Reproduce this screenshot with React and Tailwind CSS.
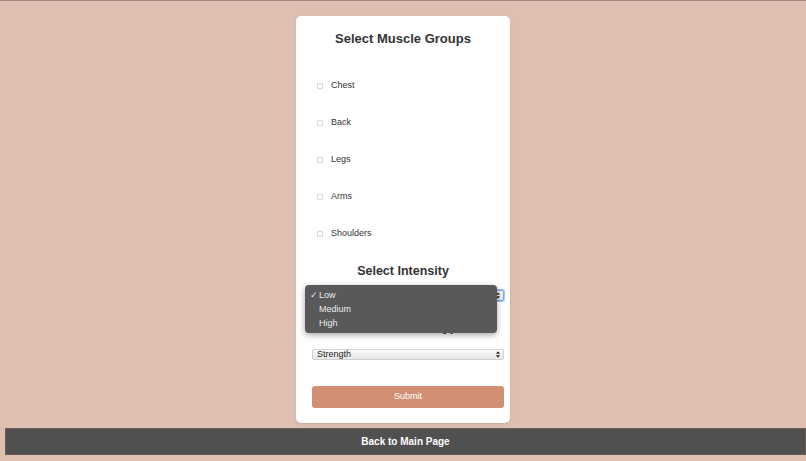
import React from 'react';

const muscles = ['Chest', 'Back', 'Legs', 'Arms', 'Shoulders'];

const Arrows = () => (
  <svg viewBox="0 0 6 10" className="w-[4px] h-[7px]">
    <path d="M3 0 L6 4 L0 4 Z M3 10 L6 6 L0 6 Z" fill="#222" />
  </svg>
);

const FakeSelect = ({ children, focused }) => (
  <div
    className={`h-[11px] w-[192px] flex items-center justify-between pl-[4px] pr-[3px] rounded-[2px] border bg-gradient-to-b from-[#fbfbfb] to-[#e6e6e6] ${
      focused ? 'border-[#7ea5e6] ring-1 ring-[#a9c4f2]' : 'border-[#d0d0d0]'
    }`}
  >
    <span className="text-[9px] leading-none text-[#222]">{children}</span>
    <Arrows />
  </div>
);

export default function App() {
  return (
    <div
      className="min-h-[461px] bg-[#dfbfb1] border-t border-[#a08a80] flex flex-col"
      style={{ fontFamily: '"Liberation Sans", Arial, sans-serif' }}
    >
      <div className="flex justify-center pt-[15px]">
        <div className="relative w-[214px] h-[407px] bg-white rounded-[5px] shadow-sm pl-[16px] flex flex-col">
          <h2 className="text-center text-[13px] font-bold text-[#333] mt-[16px] pr-[16px] leading-none">
            Select Muscle Groups
          </h2>
          <div className="flex flex-col gap-[26px] mt-[35px] pl-[5px]">
            {muscles.map((m) => (
              <label key={m} className="flex items-center h-[11px] gap-[8px]">
                <span className="w-[6px] h-[6px] border border-[#d6d6d6] rounded-[1px] bg-white" />
                <span className="text-[9px] text-[#333]">{m}</span>
              </label>
            ))}
          </div>
          <h2 className="text-center text-[12.5px] font-bold text-[#333] mt-[26px] pr-[16px] leading-none">
            Select Intensity
          </h2>
          <div className="mt-[12px]">
            <FakeSelect focused>Low</FakeSelect>
          </div>
          <h2 className="text-center text-[12.5px] font-bold text-[#333] mt-[20px] pr-[16px] leading-none">
            Select Workout Type
          </h2>
          <div className="mt-[16px]">
            <FakeSelect>Strength</FakeSelect>
          </div>
          <button className="mt-[26px] h-[22px] w-[192px] bg-[#d38f73] rounded-[3px] text-white text-[9px]">
            Submit
          </button>

          <div className="absolute left-[9px] top-[269px] w-[192px] h-[48px] bg-[#59595b] rounded-[4px] shadow-[0_2px_6px_rgba(0,0,0,0.35)] pt-[4px] flex flex-col text-[9px] text-[#ececec]">
            <div className="h-[14px] flex items-center pl-[5px]">
              <span className="w-[9px]">✓</span>
              <span>Low</span>
            </div>
            <div className="h-[14px] flex items-center pl-[14px]">Medium</div>
            <div className="h-[14px] flex items-center pl-[14px]">High</div>
          </div>
        </div>
      </div>
      <div className="mt-[5px] ml-[5px] h-[27px] bg-[#505050] border border-[#6b5d57] flex items-center justify-center">
        <span className="text-white text-[10px] font-bold">Back to Main Page</span>
      </div>
    </div>
  );
}
